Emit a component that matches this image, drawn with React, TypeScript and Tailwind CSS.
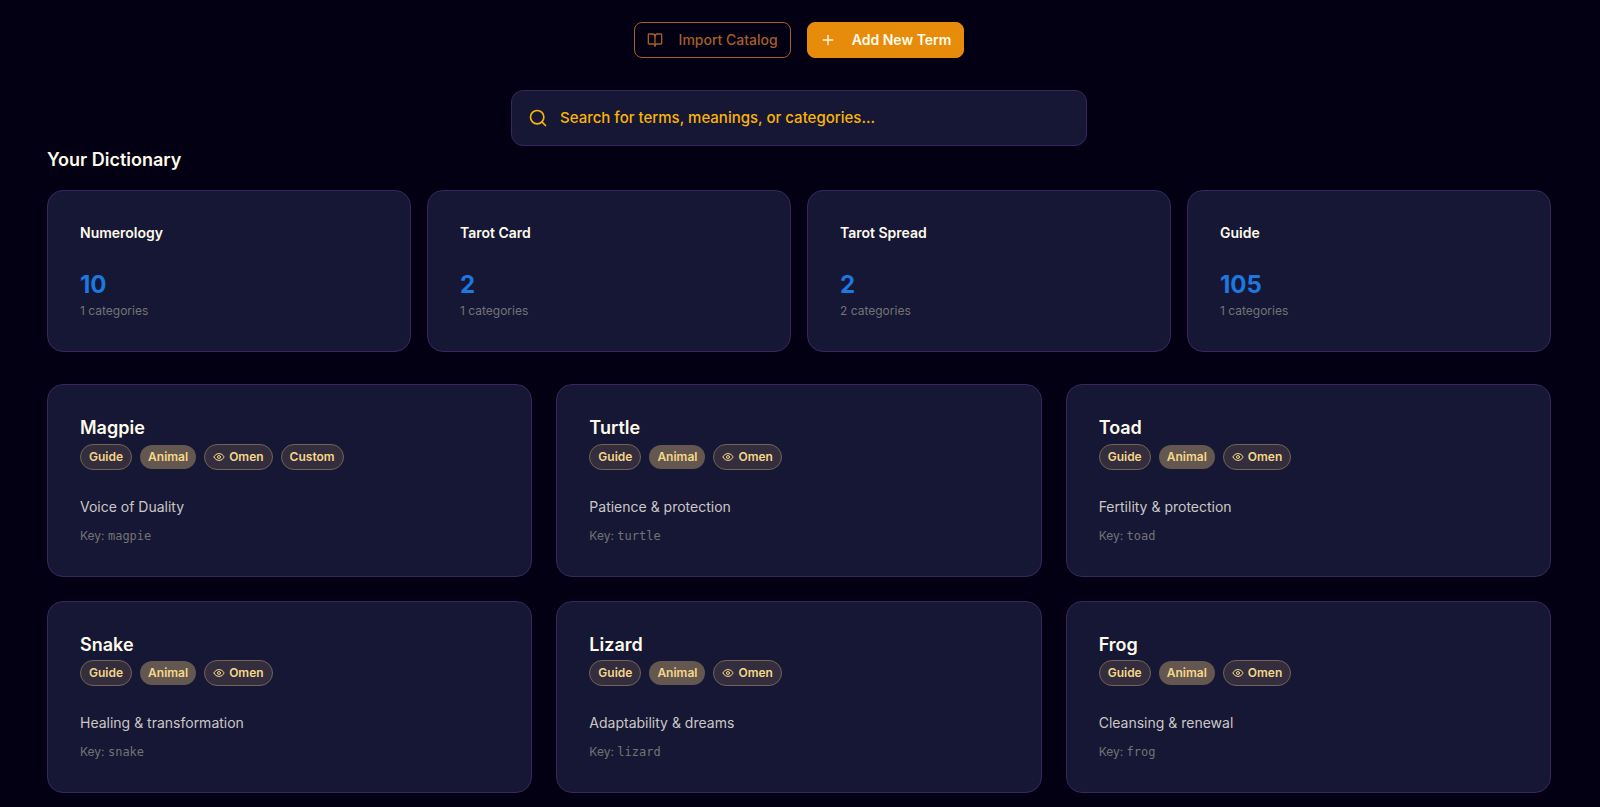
import { BookOpen, Eye, Plus, Search } from "lucide-react";

const STATS = [
  { name: "Numerology", count: 10, categories: 1 },
  { name: "Tarot Card", count: 2, categories: 1 },
  { name: "Tarot Spread", count: 2, categories: 2 },
  { name: "Guide", count: 105, categories: 1 },
];

type Term = { name: string; meaning: string; key: string; custom?: boolean };

const TERMS: Term[] = [
  { name: "Magpie", meaning: "Voice of Duality", key: "magpie", custom: true },
  { name: "Turtle", meaning: "Patience & protection", key: "turtle" },
  { name: "Toad", meaning: "Fertility & protection", key: "toad" },
  { name: "Snake", meaning: "Healing & transformation", key: "snake" },
  { name: "Lizard", meaning: "Adaptability & dreams", key: "lizard" },
  { name: "Frog", meaning: "Cleansing & renewal", key: "frog" },
];

const card = "rounded-2xl border border-[#3b255c] bg-[#161735] p-8";
const pill =
  "inline-flex items-center gap-1 rounded-full px-2 py-1 text-xs font-semibold text-[#f5d78a]";
const outlined = `${pill} border border-[#736353] bg-[#332d3e]`;

function TermCard({ term }: { term: Term }) {
  return (
    <article className={card}>
      <h3 className="text-lg font-semibold leading-tight text-[#fffbeb]">{term.name}</h3>
      <div className="mt-1 flex flex-wrap items-center gap-2">
        <span className={outlined}>Guide</span>
        <span className={`${pill} bg-[#635750]`}>Animal</span>
        <span className={outlined}>
          <Eye className="size-3" />
          Omen
        </span>
        {term.custom && <span className={outlined}>Custom</span>}
      </div>
      <p className="mt-[27px] text-sm text-[#cbc8c4]">{term.meaning}</p>
      <p className="mt-[11px] text-xs text-[#737373]">
        Key: <code className="font-['DejaVu_Sans_Mono',monospace]">{term.key}</code>
      </p>
    </article>
  );
}

export default function App() {
  return (
    <main className="min-h-screen bg-[#030014] pt-[22px] pr-[49px] pb-3 pl-[47px] font-['Inter',sans-serif]">
      {/* Actions */}
      <div className="flex justify-center gap-4">
        <button className="flex h-9 items-center gap-4 rounded-lg border border-[#a35f26] px-3 text-sm font-medium text-[#a35f26]">
          <BookOpen className="size-4" />
          Import Catalog
        </button>
        <button className="flex h-9 items-center gap-4 rounded-lg border border-[#e78b0b] bg-[#e78b0b] px-3 text-sm font-semibold text-[#fffbeb]">
          <Plus className="size-4" />
          Add New Term
        </button>
      </div>

      {/* Search */}
      <label className="mx-auto mt-8 flex h-14 max-w-xl items-center gap-3 rounded-xl border border-[#3b255c] bg-[#161735] px-4 text-[#fbb404]">
        <Search className="size-5 shrink-0" />
        <input
          type="text"
          aria-label="Search the dictionary"
          placeholder="Search for terms, meanings, or categories..."
          className="w-full bg-transparent text-[15px] font-medium outline-none placeholder:text-[#fbb404]"
        />
      </label>

      {/* Dictionary */}
      <h2 className="text-lg font-semibold text-[#fffbeb]">Your Dictionary</h2>
      <section className="mt-4 grid grid-cols-4 gap-4">
        {STATS.map((s) => (
          <div key={s.name} className={card}>
            <h3 className="text-sm font-semibold text-[#fffbeb]">{s.name}</h3>
            <p className="mt-6 text-2xl/9 font-bold text-[#1d78e0]">{s.count}</p>
            <p className="text-xs text-[#737373]">{s.categories} categories</p>
          </div>
        ))}
      </section>

      <section className="mt-8 grid grid-cols-3 gap-6">
        {TERMS.map((t) => (
          <TermCard key={t.key} term={t} />
        ))}
      </section>
    </main>
  );
}
